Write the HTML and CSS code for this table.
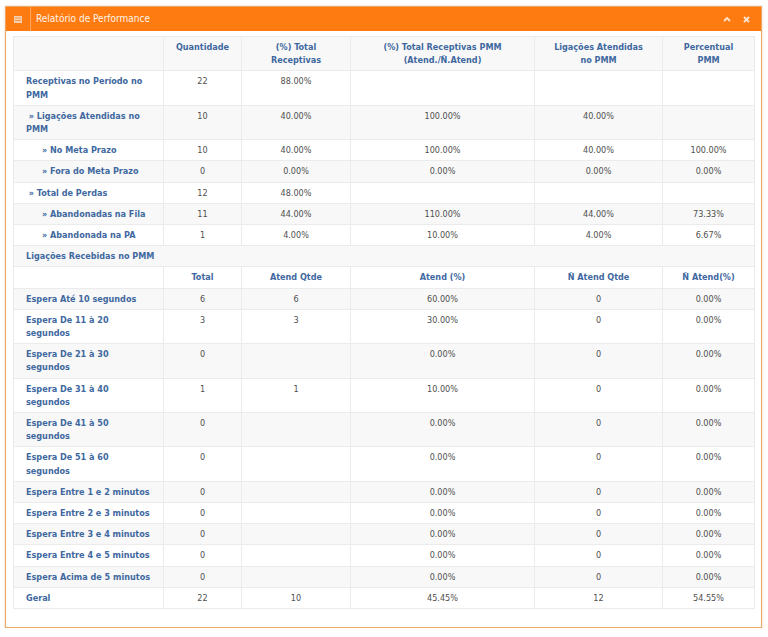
FILE: index.html
```html
<!DOCTYPE html>
<html lang="pt-BR">
<head>
<meta charset="utf-8">
<title>Relatório de Performance</title>
<link rel="stylesheet" href="styles.css">
</head>
<body>
<div class="panel">
  <div class="panel-head">
    <div class="head-icon">
      <svg width="8" height="7" viewBox="0 0 8 7"><rect x="0" y="0" width="8" height="7" fill="#f6cfae"/><rect x="1" y="1.5" width="6" height="1" fill="#f79a4c"/><rect x="1" y="4" width="6" height="1" fill="#f79a4c"/></svg>
    </div>
    <div class="title">Relatório de Performance</div>
    <div class="tools">
      <svg class="tool" width="8" height="6" viewBox="0 0 8 6"><polyline points="1,5 4,2 7,5" fill="none" stroke="#fde3cf" stroke-width="1.8"/></svg>
      <svg class="tool" width="7" height="7" viewBox="0 0 7 7"><path d="M1 1 L6 6 M6 1 L1 6" fill="none" stroke="#fde3cf" stroke-width="1.9"/></svg>
    </div>
  </div>
  <div class="panel-body">
    <table class="report">
      <colgroup>
        <col class="c1"><col class="c2"><col class="c3"><col class="c4"><col class="c5"><col class="c6">
      </colgroup>
      <tbody>
        <tr class="head">
          <th></th>
          <th>Quantidade</th>
          <th>(%) Total<br>Receptivas</th>
          <th>(%) Total Receptivas PMM<br>(Atend./Ñ.Atend)</th>
          <th>Ligações Atendidas<br>no PMM</th>
          <th>Percentual<br>PMM</th>
        </tr>
        <tr><td class="lbl">Receptivas no Período no<br>PMM</td><td>22</td><td>88.00%</td><td></td><td></td><td></td></tr>
        <tr><td class="lbl">&nbsp;» Ligações Atendidas no<br>PMM</td><td>10</td><td>40.00%</td><td>100.00%</td><td>40.00%</td><td></td></tr>
        <tr><td class="lbl lv2">» No Meta Prazo</td><td>10</td><td>40.00%</td><td>100.00%</td><td>40.00%</td><td>100.00%</td></tr>
        <tr><td class="lbl lv2">» Fora do Meta Prazo</td><td>0</td><td>0.00%</td><td>0.00%</td><td>0.00%</td><td>0.00%</td></tr>
        <tr><td class="lbl">&nbsp;» Total de Perdas</td><td>12</td><td>48.00%</td><td></td><td></td><td></td></tr>
        <tr><td class="lbl lv2">» Abandonadas na Fila</td><td>11</td><td>44.00%</td><td>110.00%</td><td>44.00%</td><td>73.33%</td></tr>
        <tr><td class="lbl lv2">» Abandonada na PA</td><td>1</td><td>4.00%</td><td>10.00%</td><td>4.00%</td><td>6.67%</td></tr>
        <tr><td class="lbl" colspan="6">Ligações Recebidas no PMM</td></tr>
        <tr class="head">
          <th></th>
          <th>Total</th>
          <th>Atend Qtde</th>
          <th>Atend (%)</th>
          <th>Ñ Atend Qtde</th>
          <th>Ñ Atend(%)</th>
        </tr>
        <tr><td class="lbl">Espera Até 10 segundos</td><td>6</td><td>6</td><td>60.00%</td><td>0</td><td>0.00%</td></tr>
        <tr><td class="lbl">Espera De 11 à 20<br>segundos</td><td>3</td><td>3</td><td>30.00%</td><td>0</td><td>0.00%</td></tr>
        <tr><td class="lbl">Espera De 21 à 30<br>segundos</td><td>0</td><td></td><td>0.00%</td><td>0</td><td>0.00%</td></tr>
        <tr><td class="lbl">Espera De 31 à 40<br>segundos</td><td>1</td><td>1</td><td>10.00%</td><td>0</td><td>0.00%</td></tr>
        <tr><td class="lbl">Espera De 41 à 50<br>segundos</td><td>0</td><td></td><td>0.00%</td><td>0</td><td>0.00%</td></tr>
        <tr><td class="lbl">Espera De 51 à 60<br>segundos</td><td>0</td><td></td><td>0.00%</td><td>0</td><td>0.00%</td></tr>
        <tr><td class="lbl">Espera Entre 1 e 2 minutos</td><td>0</td><td></td><td>0.00%</td><td>0</td><td>0.00%</td></tr>
        <tr><td class="lbl">Espera Entre 2 e 3 minutos</td><td>0</td><td></td><td>0.00%</td><td>0</td><td>0.00%</td></tr>
        <tr><td class="lbl">Espera Entre 3 e 4 minutos</td><td>0</td><td></td><td>0.00%</td><td>0</td><td>0.00%</td></tr>
        <tr><td class="lbl">Espera Entre 4 e 5 minutos</td><td>0</td><td></td><td>0.00%</td><td>0</td><td>0.00%</td></tr>
        <tr><td class="lbl">Espera Acima de 5 minutos</td><td>0</td><td></td><td>0.00%</td><td>0</td><td>0.00%</td></tr>
        <tr><td class="lbl">Geral</td><td>22</td><td>10</td><td>45.45%</td><td>12</td><td>54.55%</td></tr>
      </tbody>
    </table>
  </div>
</div>
</body>
</html>
```
FILE: styles.css
```css
html, body {
  margin: 0;
  padding: 0;
  background: #ffffff;
}

body {
  font-family: "DejaVu Sans Condensed", "DejaVu Sans", sans-serif;
  font-stretch: condensed;
}

.panel {
  margin: 6px 0 0 5px;
  width: 757px;
  height: 622px;
  box-sizing: border-box;
  border: 1px solid #f0a665;
  box-shadow: 0 0 2px rgba(210, 140, 70, 0.45);
  background: #ffffff;
  display: flex;
  flex-direction: column;
}

.panel-head {
  height: 24px;
  background: #fd7b10;
  display: flex;
  align-items: stretch;
  color: #ffffff;
  flex: none;
}

.head-icon {
  width: 24px;
  border-right: 1px solid #ffa45a;
  display: flex;
  align-items: center;
  justify-content: center;
}

.title {
  flex: 1;
  font-size: 10px;
  line-height: 24px;
  padding-left: 5px;
  color: #fff4ea;
}

.tools {
  display: flex;
  align-items: center;
  gap: 12px;
  padding-right: 11px;
}

.panel-body {
  padding: 5px 7px 0 7px;
}

.report {
  width: 741px;
  border-collapse: collapse;
  table-layout: fixed;
  border: 1px solid #e3e3e3;
}

.c1 { width: 150px; }
.c2 { width: 78px; }
.c3 { width: 109px; }
.c4 { width: 184px; }
.c5 { width: 128px; }
.c6 { width: 92px; }

.report th,
.report td {
  border: 1px solid #ebebeb;
  padding: 4px 6px 3px;
  font-size: 9px;
  line-height: 13.2px;
  vertical-align: top;
  white-space: nowrap;
  text-align: center;
  color: #4f4f4f;
  font-weight: normal;
}

.report th {
  color: #40689f;
  font-weight: bold;
}

.report td.lbl {
  text-align: left;
  padding-left: 12px;
  color: #40689f;
  font-weight: bold;
}

.report td.lv2 {
  padding-left: 28px;
}

.report tr:nth-child(odd) {
  background: #f8f8f8;
}
```
